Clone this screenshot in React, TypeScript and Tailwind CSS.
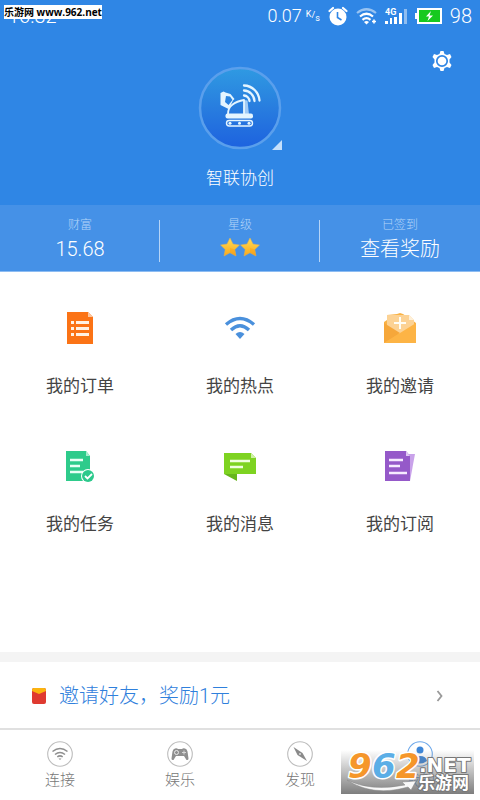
import type { ReactNode } from "react";

const OrdersIcon = () => (
  <svg width="32" height="36" viewBox="0 0 32 36" aria-hidden="true">
    <path d="M3 2h21l5 5v27H3z" fill="#fb7316" />
    <path d="M24 2l5 5h-5z" fill="#fdc59d" />
    <path d="M7 11h3v3H7zm5 0h13v3H12zM7 17h3v3H7zm5 0h13v3H12zM7 23h3v3H7zm5 0h13v3H12z" fill="#fff1e4" />
  </svg>
);

const HotspotIcon = () => (
  <svg width="32" height="36" viewBox="0 0 32 36" aria-hidden="true">
    <g fill="none" stroke="#4a90dc" strokeWidth="3.4">
      <path d="M2 14.500Q16 2.500 30 14.500" />
      <path d="M7 20Q16 11.500 25 20" />
    </g>
    <path d="M11.500 24Q16 20 20.500 24L16 29z" fill="#4a90dc" />
  </svg>
);

const InviteIcon = () => (
  <svg width="34" height="36" viewBox="0 0 34 36" aria-hidden="true">
    <path d="M1 12l3-2V5l10-1 3-1 3 1 9 6 4 3v20H1z" fill="#f9b347" />
    <path d="M4 5h22l5 5v7l-14 8-13-8z" fill="#fcd294" />
    <path d="M26 5l5 5h-5z" fill="#fff0d8" />
    <path d="M1 13l16 10L1 33z" fill="#f6a73a" />
    <path d="M33 13L1 33h32z" fill="#fdb445" />
    <path d="M17 7v12M11 13h12" stroke="#fffdf4" strokeWidth="2" />
  </svg>
);

const TasksIcon = () => (
  <svg width="32" height="36" viewBox="0 0 32 36" aria-hidden="true">
    <path d="M2 3h20l4 5v25H2z" fill="#2ecb8b" />
    <path d="M22 3l4 5h-4z" fill="#a9edcf" />
    <path d="M6 12h13M6 18h10M6 24h13" stroke="#e9fff5" strokeWidth="2.500" />
    <circle cx="24" cy="28" r="7" fill="#fff" />
    <circle cx="24" cy="28" r="6" fill="#2cc98c" />
    <path d="M21 28l2.500 2.500 4.500-4.500" fill="none" stroke="#fff" strokeWidth="1.800" />
  </svg>
);

const MessagesIcon = () => (
  <svg width="34" height="36" viewBox="0 0 34 36" aria-hidden="true">
    <path d="M1 26h13v7z" fill="#67b61c" />
    <path d="M1 5h27l5 5v16H1z" fill="#7ed321" />
    <path d="M28 5l5 5h-5z" fill="#cff0a5" />
    <path d="M7 13h20M7 19h13" stroke="#f0ffdf" strokeWidth="2.500" />
  </svg>
);

const SubscribeIcon = () => (
  <svg width="32" height="36" viewBox="0 0 32 36" aria-hidden="true">
    <path d="M22 6h9l-5 27h-4z" fill="#c9a2ea" />
    <path d="M1 3h21l4 5v25H1z" fill="#9559c9" />
    <path d="M22 3l4 5h-4z" fill="#e0c9f3" />
    <path d="M5 12h14M5 18h11M5 25h18" stroke="#f6ebff" strokeWidth="2.500" />
  </svg>
);

const AlarmIcon = () => (
  <svg width="20" height="20" viewBox="0 0 20 20" aria-hidden="true">
    <circle cx="10" cy="11" r="8.500" fill="#fff" />
    <path d="M1.500 5L5 2M15 2l3.500 3" stroke="#fff" strokeWidth="2.200" strokeLinecap="round" />
    <path d="M9.500 6v5.500l4 2.500" fill="none" stroke="#2f86e5" strokeWidth="1.600" />
  </svg>
);

const WifiStatusIcon = () => (
  <svg width="21" height="18" viewBox="0 0 21 18" aria-hidden="true">
    <g fill="none" stroke="#fff" strokeWidth="2.200">
      <path d="M1 6Q10.500-1.500 20 6" opacity=".5" />
      <path d="M4 9.500Q10.500 4 17 9.500" />
      <path d="M6.500 12.800Q10.500 9.500 14.500 12.800" />
    </g>
    <path d="M8 15q2.500-2 5 0L10.500 17.500z" fill="#fff" />
    <path d="M18 12.500v4M16 14.500h4" stroke="#fff" strokeWidth="1.600" />
  </svg>
);

const SignalIcon = () => (
  <svg width="22" height="20" viewBox="0 0 22 20" aria-hidden="true">
    <text x="0" y="9" fontSize="9" fontWeight="700" fontFamily="Roboto, sans-serif" fill="#fff">4G</text>
    <path d="M0 15h3v3H0zM5 12h2v6H5zM9 11h3v7H9zM14 7h3v11h-3z" fill="#fff" />
    <path d="M19 3h3v15h-3z" fill="#8fbdf0" />
  </svg>
);

const BatteryIcon = () => (
  <svg width="27" height="16" viewBox="0 0 27 16" aria-hidden="true">
    <path d="M0 5h3v6H0z" fill="#fff" />
    <rect x="3" y="1" width="23" height="14" fill="#17c91f" stroke="#fff" strokeWidth="2" />
    <path d="M16 3l-5 5.500h3L12.500 13l5.500-5.500h-3.500z" fill="#fff" />
  </svg>
);

const GearIcon = () => (
  <svg width="20" height="22" viewBox="0 0 20 22" aria-hidden="true">
    <path
      d="M8.500 1h3l1 3 2.500 1 3-1 1.500 3-2 2.500v3l2 2.500-1.500 3-3-1-2.500 1-1 3h-3l-1-3-2.500-1-3 1L.500 15l2-2.500v-3L.500 7 2 4l3 1 2.500-1z"
      fill="#fff"
    />
    <circle cx="10" cy="11" r="5.200" fill="none" stroke="#2f86e5" strokeWidth="1.700" />
  </svg>
);

const Avatar = () => (
  <svg width="84" height="84" viewBox="0 0 84 84" aria-hidden="true">
    <defs>
      <linearGradient id="avatar" x1="0" y1="0" x2="0" y2="1">
        <stop offset="0" stopColor="#2f9ae2" />
        <stop offset=".5" stopColor="#287ddf" />
        <stop offset="1" stopColor="#1d62df" />
      </linearGradient>
    </defs>
    <circle cx="42" cy="42" r="40" fill="url(#avatar)" stroke="#5a9fec" strokeWidth="2.500" />
    <path
      d="M22.500 27l3-1.500 2 1 5 1.500 4 5-1.500 1.500-3 6-1.500 2.500-8-4zM28 30l-1 6 3.500 3 4-5-2.500-3.500z"
      fill="#e4f5ff"
      fillRule="evenodd"
    />
    <path d="M46 34l3.500.5 1.500 14h-5z" fill="#d5eeff" opacity=".7" />
    <g fill="none" stroke="#e4f5ff" strokeLinecap="round" strokeLinejoin="round">
      <path d="M30 48q0-6 4-9 5-4 12-5v14" strokeWidth="1.800" />
      <path d="M46 29.500A6 6 0 0 1 51.500 35M46 24.500A11 11 0 0 1 56.500 35M46 19.500A16 16 0 0 1 61.500 34.500" strokeWidth="2.300" />
      <rect x="28.500" y="54.500" width="26" height="5.500" rx="2.700" strokeWidth="1.400" />
    </g>
    <rect x="27.500" y="47.500" width="27.500" height="5" rx="2" fill="#e4f5ff" />
    <g fill="#e4f5ff">
      <circle cx="32" cy="57.200" r="1.500" />
      <circle cx="41.500" cy="57.200" r="1.500" />
      <circle cx="51" cy="57.200" r="1.500" />
    </g>
  </svg>
);

const StarIcon = () => (
  <svg width="20" height="20" viewBox="0 0 20 20" aria-hidden="true">
    <defs>
      <linearGradient id="star" x1="0" y1="0" x2="0" y2="1">
        <stop offset="0" stopColor="#ffdc55" />
        <stop offset="1" stopColor="#faa91b" />
      </linearGradient>
    </defs>
    <path
      d="M10 1l3 6 6.500 1-4.700 4.500L16 19l-6-3.200L4 19l1.200-6.500L.500 8 7 7z"
      fill="url(#star)"
      stroke="#e5b052"
      strokeWidth=".5"
    />
    <path d="M10 11l4.800 1.500L16 19l-6-3.200z" fill="#f49b18" opacity=".4" />
  </svg>
);

const RedPacket = () => (
  <svg width="14" height="16" viewBox="0 0 14 16" aria-hidden="true">
    <rect width="14" height="16" rx="2" fill="#df3a30" />
    <path d="M2 0h10q2 0 2 2v1L7 6 0 3V2q0-2 2-2z" fill="#fbb40f" />
  </svg>
);

const NavRing = ({ color, children }: { color: string; children: ReactNode }) => (
  <svg width="26" height="26" viewBox="0 0 26 26" aria-hidden="true">
    <circle cx="13" cy="13" r="12.300" fill="#fff" stroke={color} strokeWidth="1.100" />
    {children}
  </svg>
);

const ConnectIcon = () => (
  <NavRing color="#bdbdbd">
    <g fill="none" stroke="#8f8f8f" strokeWidth="1.600">
      <path d="M5.500 10.500Q13 4.500 20.500 10.500" />
      <path d="M8 13.500Q13 9.500 18 13.500" />
      <path d="M10.300 15.800Q13 14 15.700 15.800" />
    </g>
    <path d="M11.500 17.500h3L13 19z" fill="#8f8f8f" />
  </NavRing>
);

const GameIcon = () => (
  <NavRing color="#bdbdbd">
    <path
      d="M8 7.500q2-.5 3 .500h4q1-1 3-.500 2 .5 2.500 3l1 7q0 2-2 1.500L17 15H9l-2.500 4q-2 .5-2-1.500l1-7q.5-2.500 2.500-3z"
      fill="#8f8f8f"
    />
    <circle cx="9.500" cy="11.500" r="2" fill="#8f8f8f" stroke="#e8e8e8" />
    <path d="M17 9.500v4M15 11.500h4" stroke="#d8d8d8" />
  </NavRing>
);

const CompassIcon = () => (
  <NavRing color="#bdbdbd">
    <path d="M6.500 6l9 6 4.500 8-9.500-6z" fill="#8a8a8a" />
    <circle cx="13" cy="13" r="1" fill="#ddd" />
  </NavRing>
);

const MeIcon = () => (
  <NavRing color="#6fa9ea">
    <circle cx="13" cy="9" r="3.500" fill="#3d86d8" />
    <path d="M6 20q1-5 7-5t7 5q-7 5-14 0z" fill="#3d86d8" />
  </NavRing>
);

const SiteLogo = () => (
  <svg width="133" height="54" viewBox="0 -10 133 54" role="img" aria-label="962.NET 乐游网">
    <defs>
      <linearGradient id="shade" x1="0" y1="0" x2="0" y2="1">
        <stop offset="0" stopColor="#777" stopOpacity="0" />
        <stop offset="1" stopColor="#777" stopOpacity=".95" />
      </linearGradient>
    </defs>
    <rect width="133" height="44" fill="url(#shade)" />
    <path d="M6 30Q30 42 64 35l-3-3 14-1-5 9-3-3Q32 47 6 30z" fill="#f8f8f8" stroke="#888" strokeWidth=".5" />
    <g
      fontFamily="DejaVu Sans, sans-serif"
      fontWeight="700"
      fontStyle="italic"
      fontSize="34"
      stroke="#fff"
      strokeWidth="3"
      strokeLinejoin="round"
      paintOrder="stroke"
    >
      <text x="7" y="28" fill="#f5962a">9</text>
      <text x="31" y="28" fill="#5baee6">6</text>
      <text x="55" y="28" fill="#f5962a">2</text>
    </g>
    <g fill="#fff" stroke="#777" strokeWidth="2" strokeLinejoin="round" paintOrder="stroke" fontWeight="700">
      <text x="78" y="22" fontSize="20" fontFamily="DejaVu Sans, sans-serif">.NET</text>
      <text x="77" y="39" fontSize="17" fontFamily="Noto Sans CJK SC, sans-serif">乐游网</text>
    </g>
  </svg>
);

const features = [
  { label: "我的订单", icon: <OrdersIcon /> },
  { label: "我的热点", icon: <HotspotIcon /> },
  { label: "我的邀请", icon: <InviteIcon /> },
  { label: "我的任务", icon: <TasksIcon /> },
  { label: "我的消息", icon: <MessagesIcon /> },
  { label: "我的订阅", icon: <SubscribeIcon /> },
];

const stats = [
  { label: "财富", value: "15.68" },
  {
    label: "星级",
    value: (
      <span className="flex pb-1" role="img" aria-label="2 星">
        <StarIcon />
        <StarIcon />
      </span>
    ),
  },
  { label: "已签到", value: "查看奖励" },
];

const tabs = [
  { label: "连接", icon: <ConnectIcon /> },
  { label: "娱乐", icon: <GameIcon /> },
  { label: "发现", icon: <CompassIcon /> },
  { label: "我的", icon: <MeIcon />, active: true },
];

const StatusBar = () => (
  <div className="flex h-8 items-center justify-between px-2 text-xl leading-8 font-light">
    <span>16:32</span>
    <div className="flex items-center gap-2">
      <span className="flex items-center gap-1 text-lg">
        0.07
        <span className="flex text-[9px] leading-3 font-normal">
          <span className="pb-1">K</span>
          <span className="pt-px">/</span>
          <span className="pt-1">s</span>
        </span>
      </span>
      <AlarmIcon />
      <WifiStatusIcon />
      <SignalIcon />
      <BatteryIcon />
      <span>98</span>
    </div>
  </div>
);

const App = () => {
  return (
    <div className="relative flex min-h-screen flex-col bg-white font-['Roboto','Noto_Sans_CJK_SC',sans-serif] text-[#333]">
      <header className="bg-[#2f86e5] text-white">
        <StatusBar />
        <div className="flex justify-end px-[26px] pt-[18px]">
          <button type="button" aria-label="设置" className="flex size-6 justify-center">
            <GearIcon />
          </button>
        </div>
        <div className="-mt-2 flex flex-col items-center pb-[15px]">
          <button type="button" aria-label="头像" className="relative">
            <Avatar />
            <svg className="absolute right-0 bottom-0" width="10" height="10" viewBox="0 0 10 10" aria-hidden="true">
              <path d="M10 0v10H0z" fill="#c5e0fb" />
            </svg>
          </button>
          <h1 className="mt-4 text-[17px] leading-6 font-light">智联协创</h1>
        </div>
      </header>

      <section className="grid h-[67px] grid-cols-3 border-b border-[#8dbcf2] bg-[#4591e7] text-white">
        {stats.map((stat, index) => (
          <div key={stat.label} className="relative flex flex-col items-center pt-2.5">
            <span className="text-xs leading-5 font-light text-[#b4d5f9]">{stat.label}</span>
            <div className="flex h-7 items-center text-xl leading-7 font-light">{stat.value}</div>
            {index < 2 && <span className="absolute top-[15px] right-0 h-[42px] w-px bg-[#b5d4f7]" />}
          </div>
        ))}
      </section>

      <main className="grid flex-1 grid-cols-3 content-start gap-y-[50px] pt-[38px]">
        {features.map((feature) => (
          <button key={feature.label} type="button" className="flex flex-col items-center gap-7">
            {feature.icon}
            <span className="text-[17px] leading-6 font-normal text-[#444]">{feature.label}</span>
          </button>
        ))}
      </main>

      <div className="border-t-10 border-[#f4f4f4]">
        <a href="#invite" className="flex h-[66px] items-center pt-0.5 pr-9 pl-8 text-xl text-[#2f80dc]">
          <RedPacket />
          <span className="ml-[13px] flex-1 font-light">邀请好友，奖励1元</span>
          <svg width="8" height="12" viewBox="0 0 8 12" aria-hidden="true">
            <path d="M1.500 1l4 5-4 5" fill="none" stroke="#999" strokeWidth="1.800" />
          </svg>
        </a>
      </div>

      <nav className="grid h-[72px] grid-cols-4 border-t-2 border-[#e0e0e0]">
        {tabs.map((tab) => (
          <a
            key={tab.label}
            href="#tab"
            className={`flex flex-col items-center pt-[11px] text-[15px] leading-6 font-light ${
              tab.active ? "text-[#3484dc]" : "text-[#777]"
            }`}
          >
            {tab.icon}
            <span className="pt-px">{tab.label}</span>
          </a>
        ))}
      </nav>

      <div className="absolute top-[5px] left-1 bg-white font-['Open_Sans','Noto_Sans_CJK_SC',sans-serif] text-[10px] leading-[14px] font-bold text-black">
        乐游网 www.962.net
      </div>
      <div className="absolute right-1.5 bottom-1.5">
        <SiteLogo />
      </div>
    </div>
  );
};

export default App;
